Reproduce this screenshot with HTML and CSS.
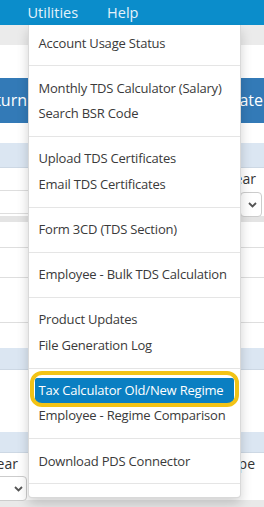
FILE: index.html
```html
<!DOCTYPE html>
<html lang="en">
<head>
    <meta charset="UTF-8">
    <title>TDS Utilities</title>
    <link rel="stylesheet" href="styles.css">
</head>
<body>
    <div class="navbar">
        <div class="nav-item open">
            Utilities
            <ul class="dropdown">
                <li><a href="#">Account Usage Status</a></li>
                <li class="divider"></li>
                <li><a href="#">Monthly TDS Calculator (Salary)</a></li>
                <li><a href="#">Search BSR Code</a></li>
                <li class="divider"></li>
                <li><a href="#">Upload TDS Certificates</a></li>
                <li><a href="#">Email TDS Certificates</a></li>
                <li class="divider"></li>
                <li><a href="#">Form 3CD (TDS Section)</a></li>
                <li class="divider"></li>
                <li><a href="#">Employee - Bulk TDS Calculation</a></li>
                <li class="divider"></li>
                <li><a href="#">Product Updates</a></li>
                <li><a href="#">File Generation Log</a></li>
                <li class="divider"></li>
                <li class="marked"><a href="#" class="active">Tax Calculator Old/New Regime</a><span class="ring"></span></li>
                <li><a href="#">Employee - Regime Comparison</a></li>
                <li class="divider"></li>
                <li><a href="#">Download PDS Connector</a></li>
                <li class="divider"></li>
            </ul>
        </div>
        <div class="nav-item">Help</div>
    </div>
    <div class="subnav"></div>

    <div class="page">
        <div class="title-bar">
            <div class="title-left"><span>File Return</span></div>
            <div class="title-right"><span>Generate</span></div>
        </div>

        <div class="form">
            <div class="band head"></div>
            <div class="row r-label">
                <div class="cell left line"></div>
                <div class="cell mid"></div>
                <div class="cell right"><span class="label">Year</span></div>
            </div>
            <div class="row r-select">
                <div class="cell left line"></div>
                <div class="cell mid"></div>
                <div class="cell right">
                    <div class="select">
                        <svg width="9" height="6" viewBox="0 0 9 6"><path d="M1 1l3.5 3.5L8 1" fill="none" stroke="#555" stroke-width="1.8"/></svg>
                    </div>
                </div>
            </div>
            <div class="band grey"></div>
            <div class="row r-plain h26"></div>
            <div class="row r-plain h30"></div>
            <div class="row r-plain h45"></div>
            <div class="row h26"></div>
            <div class="band head h22"></div>
            <div class="row h62"></div>
            <div class="band head h21"></div>
            <div class="row r-label2">
                <div class="cell left"><span class="label">Year</span></div>
                <div class="cell mid"></div>
                <div class="cell right"><span class="label">Type</span></div>
            </div>
            <div class="row r-select2">
                <div class="cell left">
                    <div class="select wide">
                        <svg width="9" height="6" viewBox="0 0 9 6"><path d="M1 1l3.5 3.5L8 1" fill="none" stroke="#555" stroke-width="1.8"/></svg>
                    </div>
                </div>
                <div class="cell mid"></div>
                <div class="cell right"></div>
            </div>
            <div class="band footer"></div>
        </div>
    </div>
</body>
</html>
```

FILE: styles.css
```css
body { margin: 0; width: 264px; height: 507px; overflow: hidden; background: #fff; font-family: 'Open Sans', sans-serif; color: #333; }

.navbar { display: flex; gap: 29px; height: 25px; padding-left: 27.5px; background: #0b8dcb; }
.nav-item { position: relative; color: #e4f2fa; font-size: 14.5px; line-height: 25px; }

.dropdown { position: absolute; top: 25px; left: 0; z-index: 10; width: 213px; box-sizing: border-box; margin: 0; padding: 5.5px 0 3.3px; list-style: none; background: #fff; border: 1px solid rgba(0,0,0,0.15); border-top: none; border-radius: 0 0 4px 4px; box-shadow: 0 6px 12px rgba(0,0,0,0.175); }
.dropdown li { position: relative; }
.dropdown a { display: block; padding: 0 10px; font-size: 13px; line-height: 25.6px; color: #3a3a3a; text-decoration: none; white-space: nowrap; letter-spacing: -0.2px; }
.dropdown .divider { height: 1px; margin: 9.25px 0; background: #e5e5e5; }
.dropdown a.active { margin: 0 6px; padding-left: 4px; background: #0a7fc2; color: #fff; border-radius: 2px; }
.ring { position: absolute; left: 1px; right: 1px; top: -7px; bottom: -4px; border: 4px solid #f2c316; border-radius: 12px; pointer-events: none; }

.subnav { height: 20px; background: #ebebeb; }

.page { padding-top: 33px; }
.title-bar { display: flex; justify-content: space-between; height: 45px; background: #337ab7; color: #fff; font-size: 16px; line-height: 45px; white-space: nowrap; }
.title-left { display: flex; justify-content: flex-end; width: 27px; overflow: hidden; }
.title-right { display: flex; justify-content: flex-end; width: 23px; overflow: hidden; padding-right: 1px; }

.form { margin-top: 20px; }
.band { height: 24px; }
.band.head { background: #dbe6f2; border-bottom: 1px solid #cdd8e4; }
.band.h22 { height: 21px; }
.band.h21 { height: 20px; }
.band.grey { height: 6px; background: #e4e4e4; }
.band.footer { height: 10px; background: #e9e9e9; }

.row { display: flex; }
.cell.left { width: 28px; }
.cell.mid { flex: 1; }
.cell.right { width: 24px; }
.cell.line { border-bottom: 1px solid #dedede; }
.r-label { height: 23px; }
.r-select { height: 25px; }
.r-select .cell.left { height: 22px; }
.r-plain { border-bottom: 1px solid #dedede; }
.h26 { height: 25px; }
.h30 { height: 29px; }
.h45 { height: 44px; }
.h62 { height: 62px; }
.r-label2 { height: 22px; }
.r-select2 { height: 25px; }

.label { display: block; font-size: 14px; line-height: 22px; color: #333; white-space: nowrap; }
.r-label .right { display: flex; justify-content: flex-end; overflow: hidden; padding-right: 8px; }
.r-label2 .left { display: flex; justify-content: flex-end; overflow: hidden; width: 18px; padding-right: 10px; }
.r-label2 .right { display: flex; justify-content: flex-end; overflow: hidden; padding-right: 9px; }

.select { display: flex; align-items: center; justify-content: flex-end; box-sizing: border-box; height: 25px; margin-top: 1px; margin-right: 2px; padding-right: 4px; background: #fff; border: 1px solid #ccc; border-radius: 4px; }
.select.wide { margin-left: -10px; margin-right: 1px; padding-right: 3px; }
```
